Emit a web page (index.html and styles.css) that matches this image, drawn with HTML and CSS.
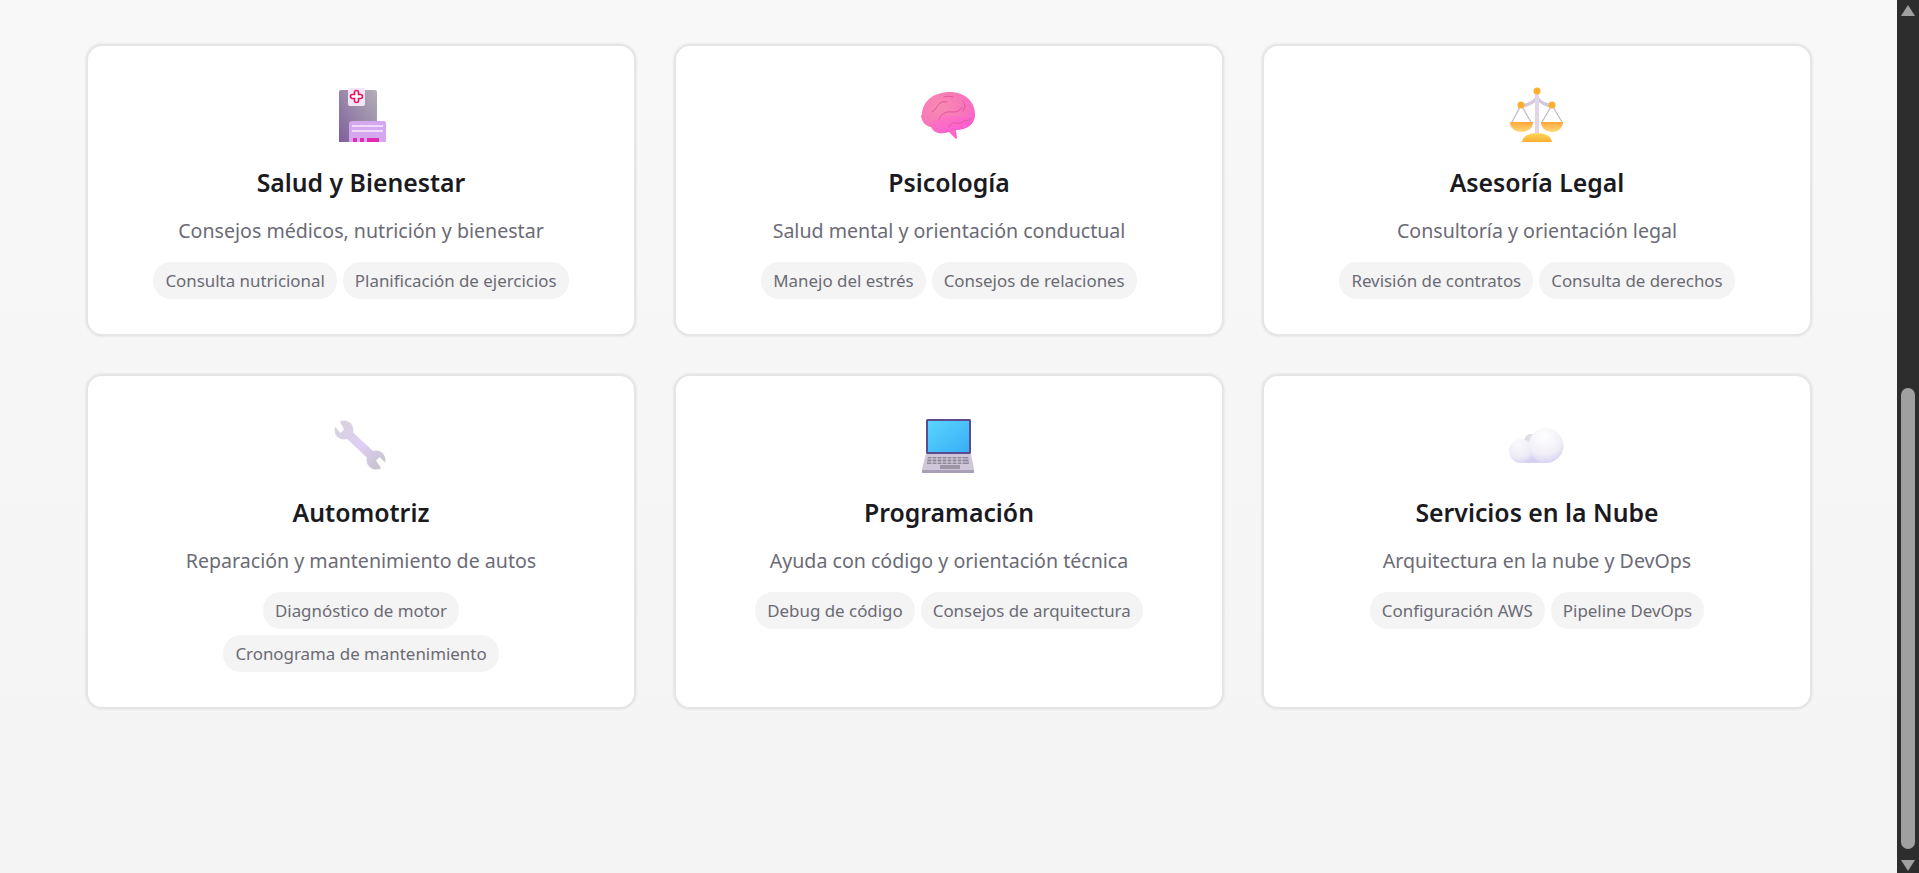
FILE: index.html
```html
<!DOCTYPE html>
<html lang="es">
<head>
  <meta charset="UTF-8">
  <title>Servicios</title>
  <link rel="stylesheet" href="styles.css">
</head>
<body>

<main class="contenido">
  <section class="grid">

    <article class="card">
      <svg class="icono" viewBox="0 0 64 64">
        <defs>
          <linearGradient id="edificio" x1="0" y1="1" x2="1" y2="0">
            <stop offset="0" stop-color="#7f5f9c"/>
            <stop offset="1" stop-color="#b3afb5"/>
          </linearGradient>
        </defs>
        <path d="M12 6h34a2 2 0 0 1 2 2v50H10V8a2 2 0 0 1 2-2z" fill="url(#edificio)"/>
        <rect x="19" y="4" width="17" height="18" rx="2" fill="#f1e6f5"/>
        <path d="M25.500 8.500a2 2 0 0 1 4 0v2h2a2 2 0 0 1 0 4h-2v2a2 2 0 0 1-4 0v-2h-2a2 2 0 0 1 0-4h2z" fill="#fff" stroke="#ea1160" stroke-width="1.600"/>
        <path d="M23 37h32a2 2 0 0 1 2 2v19H20V40a3 3 0 0 1 3-3z" fill="#d4a8ee"/>
        <path d="M23 41h31v2H23zM23 46h31v2H23z" fill="#f0dcfa"/>
        <path d="M24 54h4v4h-4zM31 54h4v4h-4zM38 54h12v4H38z" fill="#e22bb0"/>
      </svg>
      <h2>Salud y Bienestar</h2>
      <p>Consejos médicos, nutrición y bienestar</p>
      <div class="chips">
        <span class="chip">Consulta nutricional</span>
        <span class="chip">Planificación de ejercicios</span>
      </div>
    </article>

    <article class="card">
      <svg class="icono" viewBox="0 0 64 64">
        <defs>
          <radialGradient id="cerebro" cx="0.350" cy="0.300" r="0.850">
            <stop offset="0" stop-color="#f78ab0"/>
            <stop offset="0.600" stop-color="#f774bc"/>
            <stop offset="1" stop-color="#ff50d8"/>
          </radialGradient>
          <linearGradient id="lobulo" x1="0" y1="0" x2="1" y2="1">
            <stop offset="0" stop-color="#f97bbd"/>
            <stop offset="1" stop-color="#ff56d6"/>
          </linearGradient>
        </defs>
        <path d="M5 31C5 17 17 8 33 8c15 0 25 10 25 22 0 8-5 13-12 15l-7 1 1 8-1 1-7-7c-3 1-8 2-11 1-4-1-6-4-7-6-4 0-10-5-10-12z" fill="url(#cerebro)"/>
        <path d="M15 43c-1-5 3-9 7-7 3-7 14-4 20-3 6 0 12-1 16-3 0 8-5 13-12 15l-7 1c-6 2-15 3-19 1-3-1-4-2-5-4z" fill="url(#lobulo)"/>
        <path d="M22 36c1-5 6-9 13-8 5 0 8-1 10-5M15 28c4-2 5-6 8-9 2-2 4-1 7-1M27 13c3-1 6-1 9 0M46 17c3 4 2 7 0 10M32 43c1-3 4-5 7-4 3 1 6 0 8-2M47 37c3 0 6-1 8-3" fill="none" stroke="#e2559c" stroke-width="1" stroke-linecap="round"/>
      </svg>
      <h2>Psicología</h2>
      <p>Salud mental y orientación conductual</p>
      <div class="chips">
        <span class="chip">Manejo del estrés</span>
        <span class="chip">Consejos de relaciones</span>
      </div>
    </article>

    <article class="card">
      <svg class="icono" viewBox="0 0 64 64">
        <defs>
          <linearGradient id="platillo" x1="0" y1="0" x2="0" y2="1">
            <stop offset="0" stop-color="#ffa63a"/>
            <stop offset="1" stop-color="#ffd97a"/>
          </linearGradient>
          <linearGradient id="base" x1="0" y1="0" x2="0" y2="1">
            <stop offset="0" stop-color="#ffd95c"/>
            <stop offset="1" stop-color="#f9ae2e"/>
          </linearGradient>
        </defs>
        <path d="M16 21L7 38M16 21l10 17M47 21l-10 17M47 21l10 17" fill="none" stroke="#c9b8cc" stroke-width="1.300"/>
        <path d="M16 22c7-1 12-3 16-8 4 5 9 7 15 8" fill="none" stroke="#d5c8dc" stroke-width="3.500"/>
        <rect x="30" y="8" width="4" height="42" fill="#e2d6e6"/>
        <circle cx="32" cy="7" r="3.500" fill="#ffae2e"/>
        <circle cx="16" cy="21" r="3.500" fill="#ffae2e"/>
        <circle cx="47" cy="21" r="3.500" fill="#ffae2e"/>
        <path d="M5 38h23c0 6-5 10-11.500 10S5 44 5 38zM36 38h22c0 6-5 10-11 10s-11-4-11-10z" fill="url(#platillo)"/>
        <path d="M17 58c1-6 7-9 15-9s14 3 15 9z" fill="url(#base)"/>
      </svg>
      <h2>Asesoría Legal</h2>
      <p>Consultoría y orientación legal</p>
      <div class="chips">
        <span class="chip">Revisión de contratos</span>
        <span class="chip">Consulta de derechos</span>
      </div>
    </article>

    <article class="card">
      <svg class="icono" viewBox="0 0 64 64">
        <defs>
          <linearGradient id="llave" gradientUnits="userSpaceOnUse" x1="8" y1="8" x2="54" y2="54">
            <stop offset="0" stop-color="#d6d2da"/>
            <stop offset="0.500" stop-color="#e0cff5"/>
            <stop offset="1" stop-color="#c6c1cc"/>
          </linearGradient>
        </defs>
        <circle cx="15" cy="16" r="9.500" fill="url(#llave)"/>
        <circle cx="47" cy="46" r="9.500" fill="url(#llave)"/>
        <path d="M15 16l32 30" stroke="url(#llave)" stroke-width="9"/>
        <path d="M15 15.500l-3.500 3.500L2 8l6-6zM47 46.500l3.500-3.500L62 54l-6 6z" fill="#fff"/>
      </svg>
      <h2>Automotriz</h2>
      <p>Reparación y mantenimiento de autos</p>
      <div class="chips">
        <span class="chip">Diagnóstico de motor</span>
        <span class="chip">Cronograma de mantenimiento</span>
      </div>
    </article>

    <article class="card">
      <svg class="icono" viewBox="0 0 64 64">
        <defs>
          <linearGradient id="pantalla" x1="0" y1="0" x2="1" y2="1">
            <stop offset="0" stop-color="#5ad4ff"/>
            <stop offset="1" stop-color="#38aef5"/>
          </linearGradient>
        </defs>
        <rect x="9" y="5" width="45" height="35" rx="1.500" fill="#5b4b8f"/>
        <rect x="11" y="7" width="41" height="31" fill="url(#pantalla)"/>
        <path d="M9 40h45l3 15v3H5v-3z" fill="#cfc6d9"/>
        <path d="M5 56h52v3H5z" fill="#a9a0b8"/>
        <path d="M11 43h40l1 7H10z" fill="#8d8799"/>
        <path d="M11 45h40M10.500 48h41M15 43v7M20 43v7M25 43v7M30 43v7M35 43v7M40 43v7M45 43v7" stroke="#e4deea" stroke-width="0.800"/>
        <rect x="23" y="51" width="20" height="4" fill="#9b95a6"/>
      </svg>
      <h2>Programación</h2>
      <p>Ayuda con código y orientación técnica</p>
      <div class="chips">
        <span class="chip">Debug de código</span>
        <span class="chip">Consejos de arquitectura</span>
      </div>
    </article>

    <article class="card">
      <svg class="icono" viewBox="0 0 64 64">
        <defs>
          <radialGradient id="nube" cx="0.450" cy="0.250" r="0.850">
            <stop offset="0" stop-color="#fefefe"/>
            <stop offset="0.600" stop-color="#f1eff6"/>
            <stop offset="1" stop-color="#cfc8f0"/>
          </radialGradient>
          <radialGradient id="nubita" cx="0.400" cy="0.200" r="0.950">
            <stop offset="0" stop-color="#fafafc"/>
            <stop offset="0.600" stop-color="#eeecf5"/>
            <stop offset="1" stop-color="#d0c9f2"/>
          </radialGradient>
        </defs>
        <circle cx="26" cy="27" r="7" fill="#dedce4"/>
        <path d="M16 38h26v11H16z" fill="#d6d0f2"/>
        <circle cx="16" cy="37" r="12" fill="url(#nubita)"/>
        <circle cx="41" cy="31.500" r="17.500" fill="url(#nube)"/>
      </svg>
      <h2>Servicios en la Nube</h2>
      <p>Arquitectura en la nube y DevOps</p>
      <div class="chips">
        <span class="chip">Configuración AWS</span>
        <span class="chip">Pipeline DevOps</span>
      </div>
    </article>

  </section>
</main>

<aside class="scrollbar">
  <span class="flecha arriba"></span>
  <div class="pista"><div class="thumb"></div></div>
  <span class="flecha abajo"></span>
</aside>

</body>
</html>
```

FILE: styles.css
```css
* { box-sizing: border-box; }
html, body { height: 100%; }
body { margin: 0; display: flex; overflow: hidden; font-family: "Noto Sans", sans-serif; background: linear-gradient(#f8f8f8, #f4f4f4); }

.contenido { flex: 1; padding: 44px 85px 0 86px; }
.grid { display: grid; grid-template-columns: repeat(3, 1fr); gap: 38px; }

.card { display: flex; flex-direction: column; align-items: center; padding: 38px 38px 35px; background: #fff; border: 2px solid #e5e5e5; border-radius: 16px; box-shadow: 0 0 2px 1px rgba(0,0,0,0.05); text-align: center; }
.icono { display: block; width: 64px; height: 64px; }
.card h2 { margin: 17px 0 19px; font-size: 24.800px; line-height: 34px; font-weight: 600; color: #1a1a1f; }
.card p { margin: 0 0 18px; font-size: 19.600px; line-height: 26px; color: #6b6b76; }

.chips { display: flex; flex-wrap: wrap; justify-content: center; gap: 6px; }
.chip { padding: 0 12px; background: #f4f4f5; border-radius: 18px; font-size: 16.900px; line-height: 37px; color: #6b6b73; }

.scrollbar { display: flex; flex-direction: column; align-items: center; width: 22px; background: #2d2d2d; }
.flecha { width: 0; height: 0; border-left: 7px solid transparent; border-right: 7px solid transparent; }
.arriba { margin-top: 5px; border-bottom: 11px solid #a0a0a0; }
.abajo { margin-bottom: 2px; border-top: 11px solid #a0a0a0; }
.pista { flex: 1; width: 100%; padding: 372px 4px 11px; }
.thumb { height: 100%; background: #a0a0a0; border-radius: 7px; }
```
